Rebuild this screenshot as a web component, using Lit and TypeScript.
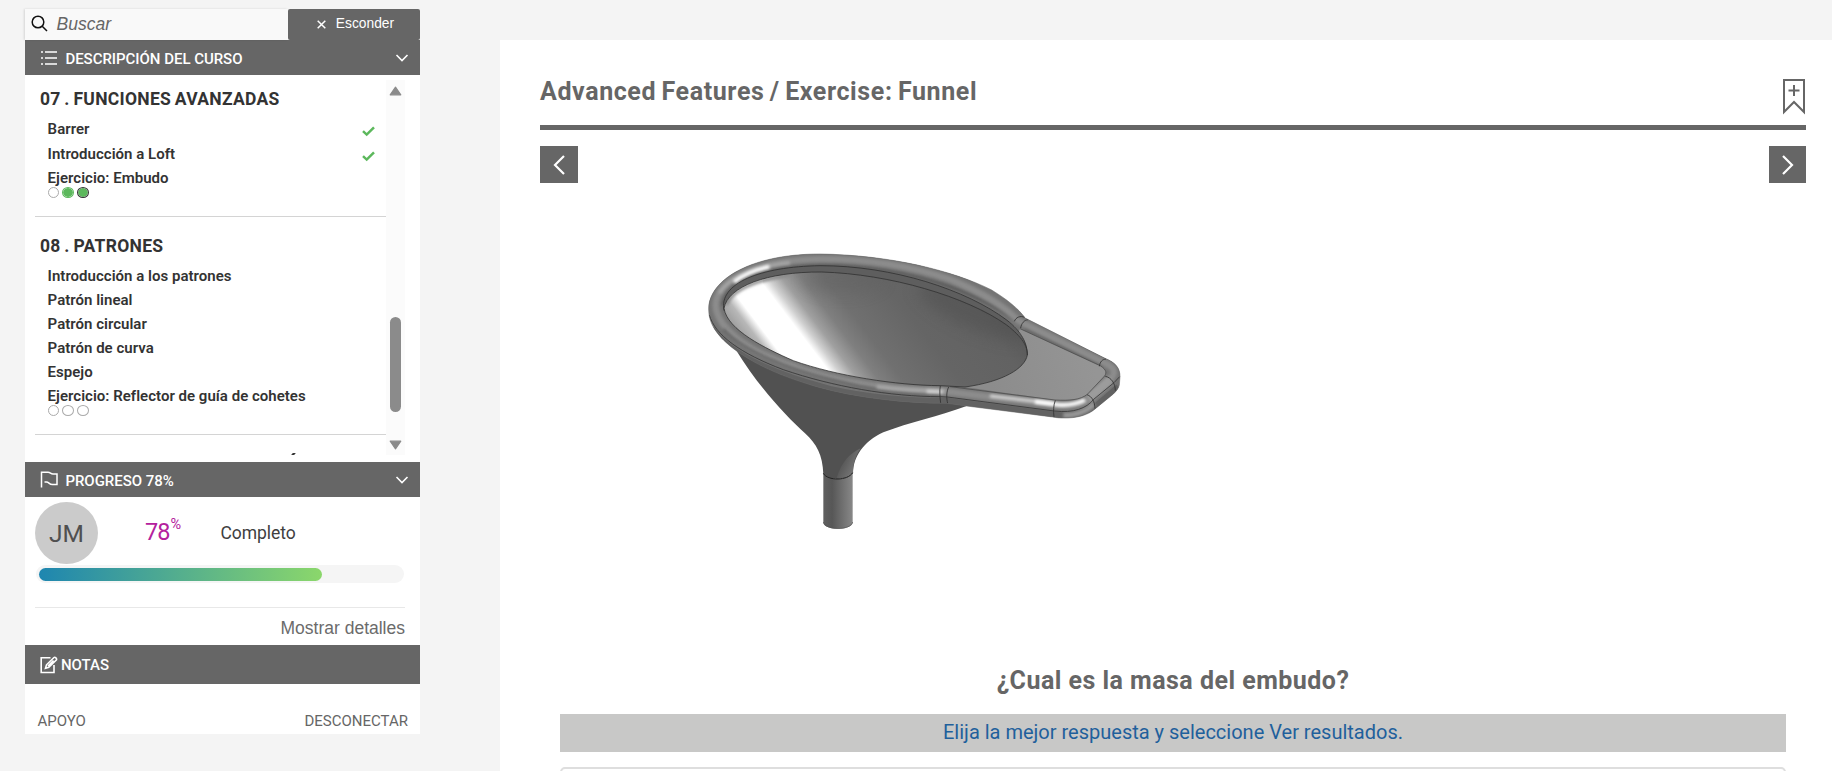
import { LitElement, html, css, svg, nothing } from "lit";
import { customElement, property } from "lit/decorators.js";
import { classMap } from "lit/directives/class-map.js";

type Step = "empty" | "done" | "current";
interface Lesson { title: string; done?: boolean; steps?: Step[] }
interface Chapter { title: string; lessons: Lesson[] }

const CHAPTERS: Chapter[] = [
  {
    title: "07 . FUNCIONES AVANZADAS",
    lessons: [
      { title: "Barrer", done: true },
      { title: "Introducción a Loft", done: true },
      { title: "Ejercicio: Embudo", steps: ["empty", "done", "current"] },
    ],
  },
  {
    title: "08 . PATRONES",
    lessons: [
      { title: "Introducción a los patrones" },
      { title: "Patrón lineal" },
      { title: "Patrón circular" },
      { title: "Patrón de curva" },
      { title: "Espejo" },
      { title: "Ejercicio: Reflector de guía de cohetes", steps: ["empty", "empty", "empty"] },
    ],
  },
];

const chevronDown = html`<svg width="14" height="10" viewBox="0 0 14 10" fill="none" stroke="#fff" stroke-width="1.6"><path d="M1.5 2 L7 7.5 L12.5 2"/></svg>`;

@customElement("course-outline")
export class CourseOutline extends LitElement {
  static styles = css`
    :host { display: flex; height: 387px; background: #fff; box-sizing: border-box; padding: 5px 15px 7px 10px; color: #333; }
    .list { flex: 1; overflow: hidden; padding-top: 4px; }
    h2 { margin: 0 0 3px; padding-left: 5px; font-size: 17.5px; line-height: 30px; letter-spacing: 0.28px; word-spacing: -0.9px; font-weight: 700; }
    .lesson { display: flex; justify-content: space-between; height: 24px; line-height: 24px; padding: 0 11px 0 12.6px; font-size: 15px; font-weight: 600; letter-spacing: 0.02px; }
    .lesson:first-of-type.done { height: 25px; }
    .lesson svg { margin-top: 9px; }
    .steps { display: flex; gap: 3px; margin: -3px 0 18px 13px; height: 11px; }
    .step { box-sizing: border-box; width: 12px; height: 11px; border: 1px solid #aaa; border-radius: 50%; background: #fff; }
    .step:first-child { width: 11px; }
    .step.done, .step.current { background: radial-gradient(closest-side, #5cb85c 88%, #d5ecd5 100%); }
    .step.done { border-color: #5cb85c; }
    .step.current { border-color: #333; }
    .rule { height: 1px; background: #d4d4d4; margin-bottom: 14px; }
    .accent { width: 3px; height: 2px; margin: 18px 0 0 257px; background: #333; transform: skewX(-40deg); }
    .track { width: 19px; background: #fbfbfb; display: flex; flex-direction: column; align-items: center; }
    .thumb { width: 11px; height: 95px; border-radius: 6px; background: #8b8b8b; margin: 221px 0 28px; }
    .up { margin-top: 6px; }
  `;
  render() {
    return html`
      <div class="list">
        ${CHAPTERS.map((c) => html`
          <section>
            <h2>${c.title}</h2>
            ${c.lessons.map((l) => html`
              <div class=${classMap({ lesson: true, done: !!l.done })}>
                <span>${l.title}</span>
                ${l.done ? html`<svg width="13" height="11" viewBox="0 0 13 11" fill="none" stroke="#5cb85c" stroke-width="2.5"><path d="M1 5.2 L4.7 8.6 L12 1.4"/></svg>` : nothing}
              </div>
              ${l.steps ? html`<div class="steps">${l.steps.map((s) => html`<span class="step ${s}"></span>`)}</div>` : nothing}`)}
            <div class="rule"></div>
          </section>`)}
        <div class="accent"></div>
      </div>
      <div class="track">
        <svg class="up" width="13" height="10" viewBox="0 0 13 10"><path d="M6.5 1.2 L11.8 8.8 H1.2 Z" fill="#8b8b8b" stroke="#8b8b8b" stroke-width="1.2" stroke-linejoin="round"/></svg>
        <div class="thumb"></div>
        <svg width="13" height="10" viewBox="0 0 13 10"><path d="M6.5 8.8 L11.8 1.2 H1.2 Z" fill="#8b8b8b" stroke="#8b8b8b" stroke-width="1.2" stroke-linejoin="round"/></svg>
      </div>`;
  }
}

@customElement("course-progress")
export class CourseProgress extends LitElement {
  @property({ type: Number }) value = 78;
  static styles = css`
    :host { display: block; height: 148px; background: #fff; box-sizing: border-box; padding: 5px 15px 0 10px; }
    .row { display: flex; height: 62px; }
    .avatar { width: 63px; height: 62px; border-radius: 50%; background: #cbcbcb; color: #505050; font-size: 24.5px; line-height: 63px; text-align: center; }
    .pct { display: flex; width: 75.4px; margin-left: 47px; color: #b4219d; font-size: 23.5px; line-height: 61px; letter-spacing: -1px; }
    .pct small { font-size: 14.5px; line-height: 45px; letter-spacing: 0; margin-left: 1px; }
    .label { color: #404040; font-size: 17.5px; line-height: 63px; letter-spacing: -0.05px; }
    .bar { height: 18px; box-sizing: border-box; padding: 3px 2px 3px 3px; margin: 1px 1px 0; border-radius: 9px; background: #f5f5f5; }
    .fill { height: 13px; border-radius: 7px; background: linear-gradient(90deg, #1e86b0, #8bd76b); }
    .details { margin-top: 24px; border-top: 1px solid #e8e8e8; color: #6b6b6b; font: 17.5px/40px "Liberation Sans", sans-serif; text-align: right; height: 38px; white-space: nowrap; }
  `;
  render() {
    return html`
      <div class="row">
        <div class="avatar">JM</div>
        <div class="pct"><span>${this.value}</span><small>%</small></div>
        <div class="label">Completo</div>
      </div>
      <div class="bar"><div class="fill" style="width:${this.value}%"></div></div>
      <div class="details">Mostrar detalles</div>`;
  }
}

@customElement("funnel-model")
export class FunnelModel extends LitElement {
  static styles = css`:host, svg { display: block; }`;
  render() {
    const bowl = "M102 205 C114 140 230 95 395 96 C600 102 830 170 950 255 C998 292 1013 320 1012 345 C1005 385 940 425 825 441 L750 437 C620 436 440 408 310 362 C225 325 112 270 102 205 Z";
    const body = "M56 205 C58 120 180 42 390 42 C600 45 790 92 905 150 C950 178 985 205 1005 234 L1245 355 C1278 368 1290 385 1290 410 L1288 435 C1286 445 1280 452 1270 462 L1215 507 C1195 525 1160 535 1120 534 C1100 534 1090 531 1080 530 L830 498 L770 490 C650 490 500 474 380 440 C270 408 190 372 125 322 C80 285 55 250 56 205 Z";
    const tube = "M985 243 C950 205 890 163 780 118 C650 74 510 57 395 57 C200 58 85 120 77 190 C74 240 130 300 220 343 C370 412 560 450 765 454 L1095 494 C1140 500 1175 492 1200 476 L1262 416 C1282 395 1270 380 1240 367 Z";
    return svg`<svg width="450" height="300" viewBox="0 0 1350 900" fill="none" stroke-linejoin="round">
      <defs>
        <linearGradient id="bowl" gradientUnits="userSpaceOnUse" x1="-40" y1="30" x2="597" y2="-454">
          <stop offset="0" stop-color="#a0a0a0"/><stop offset=".04" stop-color="#b8b8b8"/><stop offset=".075" stop-color="#fff"/>
          <stop offset=".18" stop-color="#fff"/><stop offset=".21" stop-color="#d0d0d0"/><stop offset=".25" stop-color="#a0a0a0"/>
          <stop offset=".31" stop-color="#7f7f7f"/><stop offset=".38" stop-color="#707070"/><stop offset=".55" stop-color="#656565"/>
          <stop offset=".75" stop-color="#626262"/><stop offset="1" stop-color="#505050"/>
        </linearGradient>
        <linearGradient id="stem" gradientUnits="userSpaceOnUse" x1="400" y1="0" x2="488" y2="0">
          <stop offset="0" stop-color="#606060"/><stop offset=".3" stop-color="#575757"/><stop offset="1" stop-color="#888"/>
        </linearGradient>
        <linearGradient id="neck" gradientUnits="userSpaceOnUse" x1="455" y1="650" x2="500" y2="672">
          <stop offset="0" stop-color="#515151"/><stop offset="1" stop-color="#747474"/>
        </linearGradient>
        <linearGradient id="plate" gradientUnits="userSpaceOnUse" x1="900" y1="430" x2="1200" y2="340">
          <stop offset="0" stop-color="#8c8c8c"/><stop offset="1" stop-color="#959595"/>
        </linearGradient>
        <clipPath id="bodyClip"><path d=${body}/></clipPath>
        <clipPath id="bowlClip"><path d=${bowl}/></clipPath>
        <filter id="soft" filterUnits="userSpaceOnUse" x="0" y="0" width="1350" height="900"><feGaussianBlur stdDeviation="5"/></filter>
        <filter id="softer" filterUnits="userSpaceOnUse" x="0" y="0" width="1350" height="900"><feGaussianBlur stdDeviation="22"/></filter>
      </defs>

      <path fill="#515151" d="M138 330 C205 440 290 530 345 580 C380 612 398 645 400 702 C412 722 474 722 489 700 C490 650 520 605 580 577 C660 545 745 530 832 497 L700 420 L300 340 Z"/>
      <path fill="url(#neck)" d="M440 714 Q474 716 489 700 C489 665 498 645 512 625 C480 640 455 665 440 714 Z"/>
      <path fill="url(#stem)" d="M400 700 C412 722 474 722 488 699 V848 C484 872 404 872 400 848 Z"/>
      <path stroke="#222" stroke-width="3" d="M400 700 C412 723 474 723 488 698"/>
      <path stroke="#555" stroke-width="2" d="M400 846 C404 872 484 872 488 846"/>

      <path fill="#747474" d=${body}/>
      <g clip-path="url(#bodyClip)">
        <path stroke="#747474" stroke-width="44" d=${tube}/>
        <path stroke="#5c5c5c" stroke-width="10" filter="url(#soft)" d="M1000 255 C950 220 890 180 780 140 C650 95 510 76 395 76 C210 78 110 130 98 195"/>
        <path stroke="#585858" stroke-width="9" filter="url(#soft)" d="M1005 264 L1236 380"/>
        <path stroke="#8c8c8c" stroke-width="20" filter="url(#soft)" d=${tube}/>
        <path stroke="#606060" stroke-width="7" filter="url(#soft)" d="M100 268 C160 335 300 388 420 418 C540 450 650 464 750 466"/>
        <path stroke="#aaa" stroke-width="9" filter="url(#soft)" d="M300 68 C180 80 110 120 88 160"/>
        <path stroke="#fff" stroke-width="12" filter="url(#soft)" d="M238 80 C185 92 155 107 132 126"/>
        <path stroke="#a8a8a8" stroke-width="11" filter="url(#soft)" d="M560 440 C640 450 700 453 765 453"/>
        <path stroke="#d8d8d8" stroke-width="9" filter="url(#soft)" d="M710 454 L758 456 M900 468 L1090 490"/>
        <path stroke="#fff" stroke-width="12" filter="url(#soft)" d="M1035 485 L1105 494 C1140 497 1165 490 1185 480"/>
        <path stroke="#9c9c9c" stroke-width="26" filter="url(#soft)" d="M1195 475 L1262 418"/>
        <path stroke="#626262" stroke-width="17" d="M65 265 C120 350 280 410 420 446 C540 473 650 482 770 482 L1095 524 C1150 530 1185 520 1215 500 L1285 440"/>
        <path stroke="#999" stroke-width="15" filter="url(#soft)" d="M1120 526 C1160 526 1190 515 1212 492"/>
      </g>

      <path fill="url(#plate)" d="M990 266 L1232 378 C1250 390 1252 400 1240 412 L1192 463 C1170 480 1140 482 1095 480 L825 441 L940 380 Z"/>
      <path stroke="#444" stroke-width="2" d="M990 266 L1232 378 C1250 390 1252 400 1240 412 L1192 463 C1170 480 1140 482 1095 480 L780 440"/>
      <path fill="url(#bowl)" d=${bowl}/>
      <g clip-path="url(#bowlClip)">
        <ellipse cx="460" cy="120" rx="120" ry="40" fill="#606060" opacity=".4" filter="url(#softer)"/>
        <ellipse cx="850" cy="215" rx="180" ry="50" transform="rotate(24 850 215)" fill="#505050" opacity=".5" filter="url(#softer)"/>
        <path stroke="#8a8a8a" stroke-width="10" filter="url(#soft)" d="M108 195 C125 155 180 122 300 105"/>
      </g>
      <path fill="#5e5e5e" d="M102 205 C114 140 230 95 395 96 C600 102 830 170 950 255 C998 292 1013 320 1012 345 C1014 310 995 280 950 240 C830 150 610 77 390 77 C210 80 95 130 102 205 Z"/>
      <path stroke="#2a2a2a" stroke-width="2.2" d=${bowl}/>
      <path stroke="#2a2a2a" stroke-width="2.2" d="M102 212 C85 130 210 80 390 77 C610 77 830 150 950 240 C995 275 1012 310 1012 345"/>
      <path stroke="#333" stroke-width="2.4" d="M58 225 C75 285 150 340 280 389 C430 440 600 470 751 470 L772 471 L1093 513 C1150 520 1190 505 1211 478 L1272 428 L1289 410"/>
      <path stroke="#333" stroke-width="2.6" d="M751 438 C748 450 750 475 752 489 M776 441 C769 455 769 475 773 490 M1096 481 C1090 495 1090 515 1092 531 M1191 464 C1207 470 1214 485 1215 506 M1246 409 C1263 412 1276 430 1276 452 M1228 379 C1230 365 1237 358 1248 357 M973 244 C978 232 990 226 1004 232 M992 264 C994 250 1003 240 1014 239"/>
      <path stroke="#686868" stroke-width="1.6" d=${body}/>
    </svg>`;
  }
}

@customElement("app-root")
export class AppRoot extends LitElement {
  static styles = css`
    :host { display: flex; height: 771px; overflow: hidden; background: #f4f4f4; font-family: Roboto, sans-serif; }
    .side { width: 395px; margin: 9px 80px 0 25px; flex: none; }
    .search { display: flex; height: 31px; }
    .field { flex: 1; display: flex; align-items: center; padding-left: 6px; gap: 8.5px; background: #f9f9f9; box-shadow: -1px 0 2px rgba(0,0,0,.12); font: italic 17.5px/30px "Liberation Sans", sans-serif; color: #666; }
    .field span { margin-top: -2px; }
    .field svg { margin-top: -3px; }
    .hide { width: 132px; height: 31px; box-sizing: border-box; padding-left: 3px; display: flex; align-items: center; justify-content: center; gap: 10px; background: #666; color: #fff; border-radius: 2px; font: 13.8px/30px "Liberation Sans", sans-serif; }
    .hide span { margin-top: -1px; }
    .head { display: flex; align-items: center; height: 35px; padding: 0 11px 0 15px; background: #666; color: #fff; font-size: 15px; font-weight: 500; }
    .head .t { flex: 1; margin-left: 7.4px; padding-top: 2px; letter-spacing: -0.03px; }
    .head.notes { height: 39px; }
    .head.notes .t { margin-left: 3px; padding-top: 1px; }
    .foot { display: flex; justify-content: space-between; height: 50px; box-sizing: border-box; padding: 28px 12px 0 12.5px; background: #fff; color: #666; font-size: 15px; line-height: 18px; }
    .main { width: 1332px; margin-top: 40px; padding: 0 26px 0 40px; box-sizing: border-box; background: #fff; }
    .title { display: flex; justify-content: space-between; height: 85px; box-sizing: border-box; }
    h1 { margin: 37px 0 0; font-size: 25px; line-height: 30px; letter-spacing: 0.6px; word-spacing: -1.4px; color: #666; }
    .title svg { margin-top: 38px; }
    .rule { height: 5px; background: #666; }
    .nav { display: flex; justify-content: space-between; margin-top: 16px; }
    .btn { width: 38px; height: 37px; background: #666; display: flex; align-items: center; justify-content: center; }
    .btn.next { width: 37px; }
    .model { margin: 57px 0 0 150px; }
    h3 { margin: 126px 0 0; font-size: 25px; line-height: 30px; letter-spacing: 0.47px; color: #666; text-align: center; }
    .hint { margin: 18px 20px 0; height: 38px; line-height: 36px; background: #c8c8c7; color: #1f609c; font-size: 20px; text-align: center; }
    .answers { margin: 15px 20px 0; height: 40px; border: 2px solid #dedede; border-radius: 5px; }
  `;
  render() {
    return html`
      <aside class="side">
        <div class="search">
          <div class="field">
            <svg width="17" height="17" viewBox="0 0 17 17" fill="none" stroke="#111" stroke-width="1.5"><circle cx="7" cy="7" r="5.8"/><path d="M11.2 11.2 L16 16"/></svg>
            <span>Buscar</span>
          </div>
          <div class="hide">
            <svg width="9" height="9" viewBox="0 0 9 9" stroke="#fff" stroke-width="1.5"><path d="M.7 .7 L8.3 8.3 M8.3 .7 L.7 8.3"/></svg>
            <span>Esconder</span>
          </div>
        </div>
        <div class="head">
          <svg width="18" height="16" viewBox="0 0 18 16" stroke="#fff" stroke-width="1.5"><path d="M5 2 H17 M5 8 H17 M5 14 H17 M1 2 H3 M1 8 H3 M1 14 H3"/></svg>
          <span class="t">DESCRIPCIÓN DEL CURSO</span>${chevronDown}
        </div>
        <course-outline></course-outline>
        <div class="head">
          <svg width="18" height="17" viewBox="0 0 18 17" fill="none" stroke="#fff" stroke-width="1.5"><path d="M1.5 16.5 V1.2 H8 C10.5 1.2 10.5 3 13 3 H17 V13.5 H12.5 C9 13.5 9 11 6.5 11 H4.5"/></svg>
          <span class="t">PROGRESO 78%</span>${chevronDown}
        </div>
        <course-progress .value=${78}></course-progress>
        <div class="head notes">
          <svg width="18" height="18" viewBox="0 0 18 18" fill="none" stroke="#fff" stroke-width="1.6"><path d="M10.5 1.8 H1.2 V16.5 H14 V9"/><path d="M5.5 12.3 L6.5 8.8 L14 1.5 C15 .6 17.3 2.6 16.3 4 L8.8 11.3 Z M8 10 L13.5 4.5"/></svg>
          <span class="t">NOTAS</span>
        </div>
        <div class="foot"><span>APOYO</span><span>DESCONECTAR</span></div>
      </aside>
      <main class="main">
        <div class="title">
          <h1>Advanced Features / Exercise: Funnel</h1>
          <svg width="24" height="37" viewBox="0 0 24 37" fill="none" stroke="#666" stroke-width="2"><path d="M2 2 H22 V34 L12 24 L2 34 Z"/><path d="M6.5 12.5 H17.5 M12 7 V18"/></svg>
        </div>
        <div class="rule"></div>
        <div class="nav">
          <div class="btn"><svg width="14" height="20" viewBox="0 0 14 20" fill="none" stroke="#fff" stroke-width="2.2"><path d="M12 1 L3 10 L12 19"/></svg></div>
          <div class="btn next"><svg width="14" height="20" viewBox="0 0 14 20" fill="none" stroke="#fff" stroke-width="2.2"><path d="M2 1 L11 10 L2 19"/></svg></div>
        </div>
        <funnel-model class="model"></funnel-model>
        <h3>¿Cual es la masa del embudo?</h3>
        <div class="hint">Elija la mejor respuesta y seleccione Ver resultados.</div>
        <div class="answers"></div>
      </main>`;
  }
}
